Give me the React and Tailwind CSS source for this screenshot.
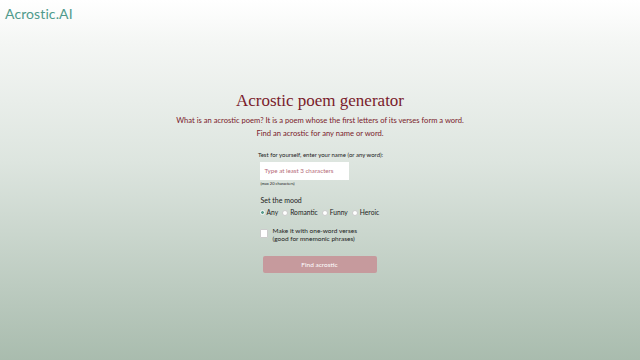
export default function App() {
  const sans = { fontFamily: '"Open Sans", "Noto Sans", sans-serif' };
  return (
    <div className="w-[640px] h-[360px] overflow-hidden bg-[linear-gradient(to_bottom,#ffffff_0%,#f4f6f4_12%,#dde5df_45%,#a9bcae_100%)] relative" style={sans}>
      <div className="pl-[5px] pt-[5px] text-[14px] leading-[18px] text-[#4f9a8c] tracking-[0.1px]" style={{ fontFamily: '"Lato", "Open Sans", sans-serif' }}>Acrostic.AI</div>
      <div className="flex flex-col items-center pt-[67px]">
        <h1 className="text-[17px] leading-[22px] text-[#7a1b2b]" style={{ fontFamily: '"Liberation Serif", "DejaVu Serif", serif' }}>Acrostic poem generator</h1>
        <p className="mt-[2px] text-[7.6px] leading-[13px] text-[#7a1b2b] text-center" style={{ fontFamily: '"Lato", sans-serif' }}>
          What is an acrostic poem? It is a poem whose the first letters of its verses form a word.<br />
          Find an acrostic for any name or word.
        </p>
        <div className="mt-[11px] w-[128px] ml-[1px] flex flex-col text-[#222]" style={{ fontFamily: '"Lato", sans-serif' }}>
          <div className="text-[6px] leading-[8px] text-center whitespace-nowrap">Test for yourself, enter your name (or any word):</div>
          <div className="mt-[3px] ml-[3px] w-[89px] h-[18px] bg-white flex items-center pl-[5px] text-[6.2px] text-[#b56a78]">Type at least 3 characters</div>
          <div className="mt-[1px] ml-[4px] text-[4px] leading-[5px]">(max 20 characters)</div>
          <div className="mt-[10px] ml-[4px] text-[7px] leading-[9px]">Set the mood</div>
          <div className="mt-[3px] ml-[3px] flex items-center gap-[2px] text-[6.7px] leading-[9px] whitespace-nowrap">
            <span className="w-[5px] h-[5px] rounded-full bg-[#5a9c8d] border border-white"></span><span className="mr-[2px]">Any</span>
            <span className="w-[6px] h-[6px] rounded-full bg-white border border-[#ccc]"></span><span className="mr-[2px]">Romantic</span>
            <span className="w-[6px] h-[6px] rounded-full bg-white border border-[#ccc]"></span><span className="mr-[2px]">Funny</span>
            <span className="w-[6px] h-[6px] rounded-full bg-white border border-[#ccc]"></span><span>Heroic</span>
          </div>
          <div className="mt-[10px] ml-[3px] flex items-start gap-[5px]">
            <span className="mt-[2px] w-[8px] h-[9px] bg-white border border-[#ccc] rounded-[1px]"></span>
            <div className="text-[6.5px] leading-[8px]">Make it with one-word verses<br />(good for mnemonic phrases)</div>
          </div>
          <div className="mt-[13px] ml-[6px] w-[114px] h-[17px] bg-[#c69a9d] rounded-[2px] flex items-center justify-center text-[6.5px] text-white">Find acrostic</div>
        </div>
      </div>
    </div>
  );
}
